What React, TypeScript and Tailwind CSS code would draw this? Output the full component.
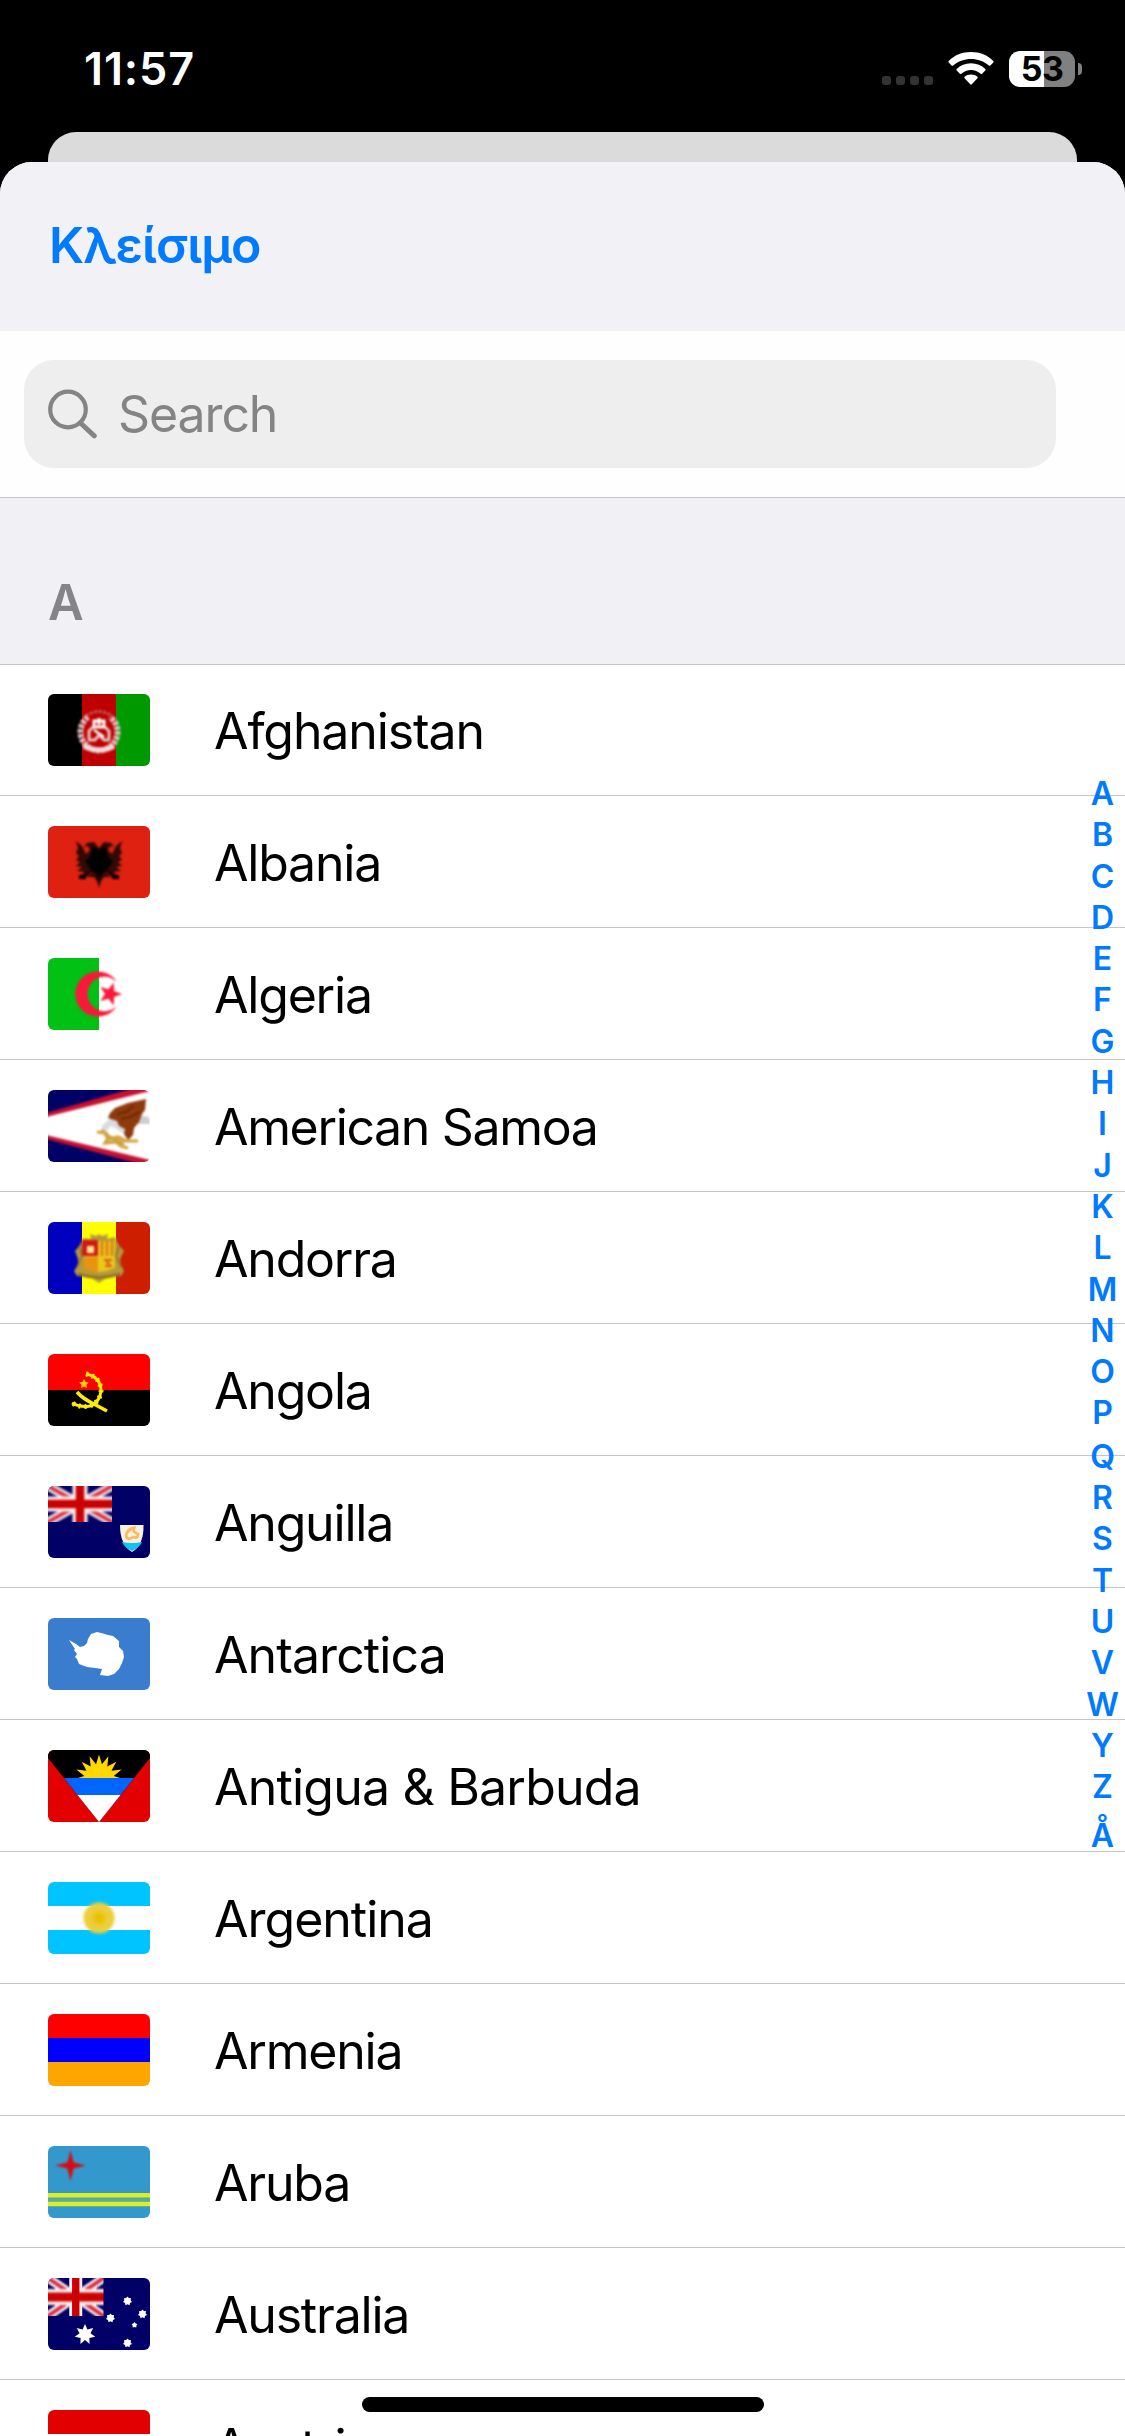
import React from 'react';

const starPoints = (cx: number, cy: number, outer: number, inner: number, tips: number, turn = -90) => {
  const pts: string[] = [];
  for (let i = 0; i < tips * 2; i++) {
    const r = i % 2 === 0 ? outer : inner;
    const a = ((turn + (i * 180) / tips) * Math.PI) / 180;
    pts.push(`${(cx + r * Math.cos(a)).toFixed(2)},${(cy + r * Math.sin(a)).toFixed(2)}`);
  }
  return pts.join(' ');
};

const UnionJack: React.FC<{ w: number; h: number }> = ({ w, h }) => (
  <svg width={w} height={h} viewBox="0 0 64 36" preserveAspectRatio="none">
    <g className="blur-[0.9px]">
      <path d="M-8 -4.500L72 40.500M72 -4.500L-8 40.500" stroke="#f4e4ea" strokeWidth="9" />
      <path d="M-8 -4.500L72 40.500M72 -4.500L-8 40.500" stroke="#dc3444" strokeWidth="3.8" />
      <path d="M32 -4V40M-4 18H68" stroke="#f8eef0" strokeWidth="15" />
      <path d="M32 -4V40M-4 18H68" stroke="#cc0000" strokeWidth="8.5" />
    </g>
  </svg>
);

const flags: Record<string, React.ReactNode> = {
  Afghanistan: (
    <>
      <path d="M0 0H34V72H0z" fill="#000" />
      <path d="M34 0H68V72H34z" fill="#be0000" />
      <path d="M68 0H102V72H68z" fill="#009900" />
      <g className="blur-[1px]" fill="none" stroke="#e6c4c4">
        <path d="M40 23A18.500 18.500 0 1 0 62 23" strokeWidth="6" strokeDasharray="3.6 1.2" />
        <path d="M36 52Q51 60 66 52" strokeWidth="5" stroke="#eedada" />
        <path d="M38 22Q51 13 64 22" strokeWidth="3" stroke="#c06060" strokeDasharray="3 1.500" />
        <path d="M41 45V37L45 33M61 45V37L57 33" strokeWidth="3" />
        <path d="M46 33V27H56V33zM51 24V31" strokeWidth="3" stroke="#fff" />
        <path d="M40 46H47L51 41L56 46H62" strokeWidth="3" />
        <path d="M46 36L56 43" strokeWidth="2.5" stroke="#fff" />
      </g>
    </>
  ),
  Albania: (
    <>
      <path d="M0 0H102V72H0z" fill="#de2110" />
      <g className="blur-[0.8px]">
        <path
          d="M51 22L46 16L39 17L36 21L40 20L42 24L38 28L34 20L28 15L30 22L28 27L31 30L28 34L32 36L28 40L34 41L29 45L36 46L33 50L38 47L42 44L44 47L39 51L46 51L49 55L51 62L53 55L56 51L63 51L58 47L60 44L64 47L69 50L66 46L73 45L68 41L74 40L70 36L74 34L71 30L74 27L72 22L74 15L68 20L64 28L60 24L62 20L66 21L63 17L56 16z"
          fill="#300a06"
        />
        <path d="M51 24L45 20L42 31L37 35L44 45L49 48L51 58L53 48L58 45L65 35L60 31L57 20z" fill="#000" />
        <path d="M43 45L34 52M59 45L68 52" stroke="#1a0000" strokeWidth="3" />
        <path d="M31 49H38V53H31zM64 49H71V53H64z" fill="#000" />
      </g>
    </>
  ),
  Algeria: (
    <>
      <path d="M0 0H102V72H0z" fill="#fff" />
      <path d="M0 0H51V72H0z" fill="#00c114" />
      <g className="blur-[0.8px]" fill="#f8183a">
        <path d="M69 24A22.600 22.600 0 1 0 69 48A17.200 17.200 0 1 1 69 24z" />
        <polygon points={starPoints(62, 36, 12, 5, 5, 0)} />
      </g>
    </>
  ),
  'American Samoa': (
    <>
      <path d="M0 0H102V72H0z" fill="#fff" />
      <g className="blur-[0.9px]">
        <path d="M-4 27.500L106 0V-6H-4zM-4 44.500L106 71V78H-4z" fill="#c8102e" />
        <path d="M-4 23.500L86 -2V-6H-4zM-4 48.500L92 74V78H-4z" fill="#000066" />
        <path d="M60 30L54 36L53 41L59 41L63 36L70 40L76 44L78 38L66 28z" fill="#d9dcdf" />
        <path d="M88 25L101 27L102 34L90 34z" fill="#cdcdd2" />
        <path d="M98 9L97 20L94 24L91 32L86 38L85 45L80 50L76 44L77 39L71 36L69 31L60 28L62 23L67 18L80 13z" fill="#8f3a0c" />
        <path d="M86 16L78 22L69 24M92 22L82 27L73 29" stroke="#6e2a06" strokeWidth="2" fill="none" />
        <path d="M49 42L58 43L62 49L70 47L78 51L90 51M54 40L60 48L57 53L68 52L73 56L80 58M58 45L76 54" stroke="#d0a23a" strokeWidth="3.2" fill="none" />
      </g>
    </>
  ),
  Andorra: (
    <>
      <path d="M0 0H34V72H0z" fill="#0000be" />
      <path d="M34 0H68V72H34z" fill="#ffff00" />
      <path d="M68 0H102V72H68z" fill="#cd1e00" />
      <g className="blur-[0.9px]">
        <path
          d="M35 16L43 17L42 12L48 14L51 12L54 14L60 12L59 17L67 15L70 22L76 29L72 37L73 43L76 49L73 54L62 55L57 57L51 61L45 57L40 55L29 54L26 49L30 43L30 37L27 29L32 23z"
          fill="#b5993a"
        />
        <path d="M36 19H67V46Q60 49 51 50Q42 49 36 46z" fill="#e9c81c" />
        <path d="M34 18H50V34H34z" fill="#d11818" />
        <path d="M39 24H46V31H39z" fill="#ffe890" />
        <path d="M36 35H50V50Q41 49 36 46z" fill="#e89410" />
        <path d="M54 19V34M59 19V34M64 19V34" stroke="#dd7a10" strokeWidth="2.4" />
        <path d="M56 38H64M57 44H64M58 40L62 42" stroke="#da5a10" strokeWidth="2" fill="none" />
        <path d="M30 52Q51 59 72 52" stroke="#8c7024" strokeWidth="2.4" fill="none" />
        <path d="M31 24L34 34L29 45M71 24L68 34L73 45" stroke="#8c7430" strokeWidth="1.6" fill="none" />
      </g>
    </>
  ),
  Angola: (
    <>
      <path d="M0 0H102V36H0z" fill="#ff0000" />
      <path d="M0 36H102V72H0z" fill="#000" />
      <g className="blur-[0.7px]" fill="none" stroke="#ffec00">
        <path d="M38 20Q53 23 53 37Q52 48 42 52Q33 54 24 49" strokeWidth="3" />
        <path d="M38 20Q53 23 53 37Q52 48 42 52Q33 54 24 49" strokeWidth="5" strokeDasharray="2 4" />
        <path d="M29 38Q34 44 44 49L59 57" strokeWidth="3.6" />
        <polygon points={starPoints(36, 30, 5, 2.6, 5)} fill="#ffd000" stroke="none" />
      </g>
    </>
  ),
  Anguilla: (
    <>
      <path d="M0 0H102V72H0z" fill="#000066" />
      <UnionJack w={64} h={36} />
      <g className="blur-[0.7px]">
        <path d="M72 39H95.500Q96 59 84 66Q72 59 72 39z" fill="#f6f3e4" />
        <path d="M74 56Q84 58 94 56Q91 62 84 65Q77 62 74 56z" fill="#10c4f4" />
        <path d="M78 50Q79 43 86 42Q84 46 90 48Q90 53 85 51Q80 55 78 50z" fill="none" stroke="#ffb95c" strokeWidth="2.8" />
      </g>
    </>
  ),
  Antarctica: (
    <>
      <path d="M0 0H102V72H0z" fill="#3a7dce" />
      <path
        className="blur-[0.7px]"
        d="M21 22L28 26L32 29L36 28L39 25L40 21L43 16L49 14L55 15.500L60 17L65 18L71 23L71 29L75 33L76 39L74 45L71 51L66 56L60 58L52 57L54 51L47 50L39 49L31 46L29 41L27 39L29 36L26 32L27 31L25 28z"
        fill="#fff"
      />
    </>
  ),
  'Antigua & Barbuda': (
    <>
      <path d="M0 0H102V72H0z" fill="#e20000" />
      <path d="M0 0H102V8L51 72L0 8z" fill="#000" />
      <polygon className="blur-[0.6px]" points={starPoints(51, 29, 24.5, 15, 16)} fill="#ffd800" />
      <path d="M16 28H86L72.500 45H29.500z" fill="#0066ff" />
      <path d="M29.500 45H72.500L51 72z" fill="#fff" />
    </>
  ),
  Argentina: (
    <>
      <path d="M0 0H102V72H0z" fill="#00c4ff" />
      <path d="M0 24H102V48H0z" fill="#fff" />
      <circle className="blur-[1.6px]" cx="51" cy="36" r="15.5" fill="#eccf3c" />
      <circle className="blur-[2px]" cx="51" cy="36" r="6" fill="#e8c000" />
    </>
  ),
  Armenia: (
    <>
      <path d="M0 0H102V24H0z" fill="#ff0000" />
      <path d="M0 24H102V48H0z" fill="#0000ff" />
      <path d="M0 48H102V72H0z" fill="#ffa500" />
    </>
  ),
  Aruba: (
    <>
      <path d="M0 0H102V72H0z" fill="#3399cc" />
      <path d="M0 47H102V60H0z" fill="#55a9a6" />
      <path d="M0 47H102V51.500H0zM0 55.800H102V60.300H0z" fill="#dcf020" />
      <polygon className="blur-[0.8px]" points={starPoints(22.5, 19.5, 15.5, 4.4, 4)} fill="#d60c14" />
    </>
  ),
  Australia: (
    <>
      <path d="M0 0H102V72H0z" fill="#000066" />
      <UnionJack w={55.5} h={38} />
      <g className="blur-[0.7px]" fill="#fff">
        <polygon points={starPoints(37, 56.5, 10.5, 5.6, 7)} />
        <polygon points={starPoints(62.5, 40, 4.6, 3.2, 7)} />
        <polygon points={starPoints(79.5, 23, 4.6, 3.2, 7)} />
        <polygon points={starPoints(94.5, 36, 4.6, 3.2, 7)} />
        <polygon points={starPoints(86.5, 47, 3, 2, 5)} />
        <polygon points={starPoints(79.5, 65, 4.6, 3.2, 7)} />
      </g>
    </>
  ),
  Austria: (
    <>
      <path d="M0 0H102V72H0z" fill="#e20000" />
      <path d="M0 24H102V48H0z" fill="#fff" />
    </>
  ),
};

const countries = Object.keys(flags);

const tracking: Record<string, string> = {
  Afghanistan: 'tracking-[-1.1px]',
  'American Samoa': 'tracking-[-1.35px]',
  Antarctica: 'tracking-[-0.9px]',
  Argentina: 'tracking-[-1px]',
  'Antigua & Barbuda': 'tracking-[-0.8px]',
};

const letters = 'ABCDEFGHIJKLMNOPQRSTUVWYZÅ'.split('');

const StatusBar: React.FC = () => (
  <div className="h-[132px] pl-[84px] pr-[43px] pt-[51px] flex items-start justify-between">
    <span className="text-[45px] leading-[36px] font-[580] text-white tracking-[0.9px]">11:57</span>
    <div className="flex items-start">
      <div className="flex gap-[5px] mt-[25px]">
        {[0, 1, 2, 3].map(i => (
          <span key={i} className="w-[9px] h-[9px] rounded-[3px] bg-[#333333]" />
        ))}
      </div>
      <svg className="ml-[15px] mt-px" width="46" height="34" viewBox="0 0 46 34" fill="#fff">
        <path d="M23 0C31.800 0 39.800 3.300 45.300 8.900Q46 9.700 45.300 10.500L42.400 13.500Q41.600 14.200 40.800 13.500C36 9.200 29.800 6.900 23 6.900S10 9.200 5.200 13.500Q4.400 14.200 3.600 13.500L0.700 10.500Q0 9.700 0.700 8.900C6.200 3.300 14.200 0 23 0z" />
        <path d="M23 11.200C28.600 11.200 33.600 13.300 37.300 16.900Q38 17.700 37.300 18.500L34.100 21.700Q33.400 22.400 32.600 21.700C30 19.400 26.700 18 23 18S16 19.400 13.400 21.700Q12.600 22.400 11.900 21.700L8.700 18.500Q8 17.700 8.700 16.900C12.400 13.300 17.400 11.200 23 11.200z" />
        <path d="M23 22.400C25.600 22.400 27.700 23.300 29.400 24.700Q30.200 25.500 29.400 26.300L23.800 32.200Q23 33 22.200 32.200L16.600 26.300Q15.800 25.500 16.600 24.700C18.300 23.300 20.400 22.400 23 22.400z" />
      </svg>
      <div className="ml-[15px] w-[66px] h-[36px] rounded-[11px] flex items-center justify-center bg-linear-to-r from-white from-[53%] to-[#808080] to-[53%]">
        <span className="text-[34px] leading-[36px] font-[650] text-black tracking-[-0.7px]">53</span>
      </div>
      <span className="ml-[3px] mt-[12px] w-[4px] h-[12px] rounded-r-full bg-[#808080]" />
    </div>
  </div>
);

const SearchBar: React.FC = () => (
  <div className="h-[167px] pt-[29px] pl-[24px] bg-[#fefefe] border-b border-[#c6c6c8]">
    <div className="w-[1032px] h-[108px] rounded-[30px] bg-[#eeeeee] flex items-center pl-[24px] text-[#848485]">
      <svg width="50" height="50" viewBox="0 0 50 50" fill="none" stroke="currentColor">
        <circle cx="20" cy="20.500" r="17.800" strokeWidth="4.200" />
        <path d="M33 34.500L46.300 46.800" strokeWidth="5" strokeLinecap="round" />
      </svg>
      <span className="ml-[20px] text-[50px] leading-[60px] tracking-[-1.1px]">Search</span>
    </div>
  </div>
);

const CountryRow: React.FC<{ name: string }> = ({ name }) => (
  <li className="h-[132px] pl-[48px] pt-[30px] flex items-start border-b border-[#c6c6c8] shrink-0">
    <svg className="rounded-[6px] shrink-0" width="102" height="72" viewBox="0 0 102 72">
      {flags[name]}
    </svg>
    <span className={`ml-[64px] mt-px text-[50px] leading-[72px] text-black whitespace-nowrap ${tracking[name] ?? 'tracking-[-1.2px]'}`}>
      {name}
    </span>
  </li>
);

const App: React.FC = () => {
  return (
    <div className="relative w-[1125px] h-[2436px] overflow-hidden bg-black font-['Inter',sans-serif]">
      <StatusBar />

      {/* Edge of the sheet underneath */}
      <div className="mx-[48px] h-[30px] rounded-t-[28px] bg-[#dbdbdb]" />

      <div className="h-[2274px] rounded-t-[32px] overflow-hidden bg-white">
        <header className="h-[169px] px-[49px] pb-[3px] flex items-center bg-[#f2f1f6]">
          <button className="text-[50px] leading-[60px] font-[560] text-[#007aff] tracking-[-0.9px]">Κλείσιμο</button>
        </header>

        <SearchBar />

        <div className="h-[166px] pl-[48px] pt-[75px] bg-[#f1f0f5]">
          <h2 className="text-[49px] leading-[60px] font-semibold text-[#858489]">A</h2>
        </div>

        <div className="h-px -mb-px bg-[#c6c6c8]" />
        <ul>
          {countries.map(name => (
            <CountryRow key={name} name={name} />
          ))}
        </ul>
      </div>

      {/* Section index */}
      <nav className="absolute right-0 top-[773px] w-[45px] flex flex-col items-center text-[32px] leading-[41.3px] font-[560] text-[#007aff]">
        {letters.map(l => (
          <span key={l} className={l === 'Q' ? 'pt-[2px]' : l === 'Å' ? 'pt-[8px]' : ''}>{l}</span>
        ))}
      </nav>

      {/* Home indicator */}
      <div className="absolute bottom-[24px] left-[362px] w-[402px] h-[15px] rounded-full bg-black" />
    </div>
  );
};

export default App;
